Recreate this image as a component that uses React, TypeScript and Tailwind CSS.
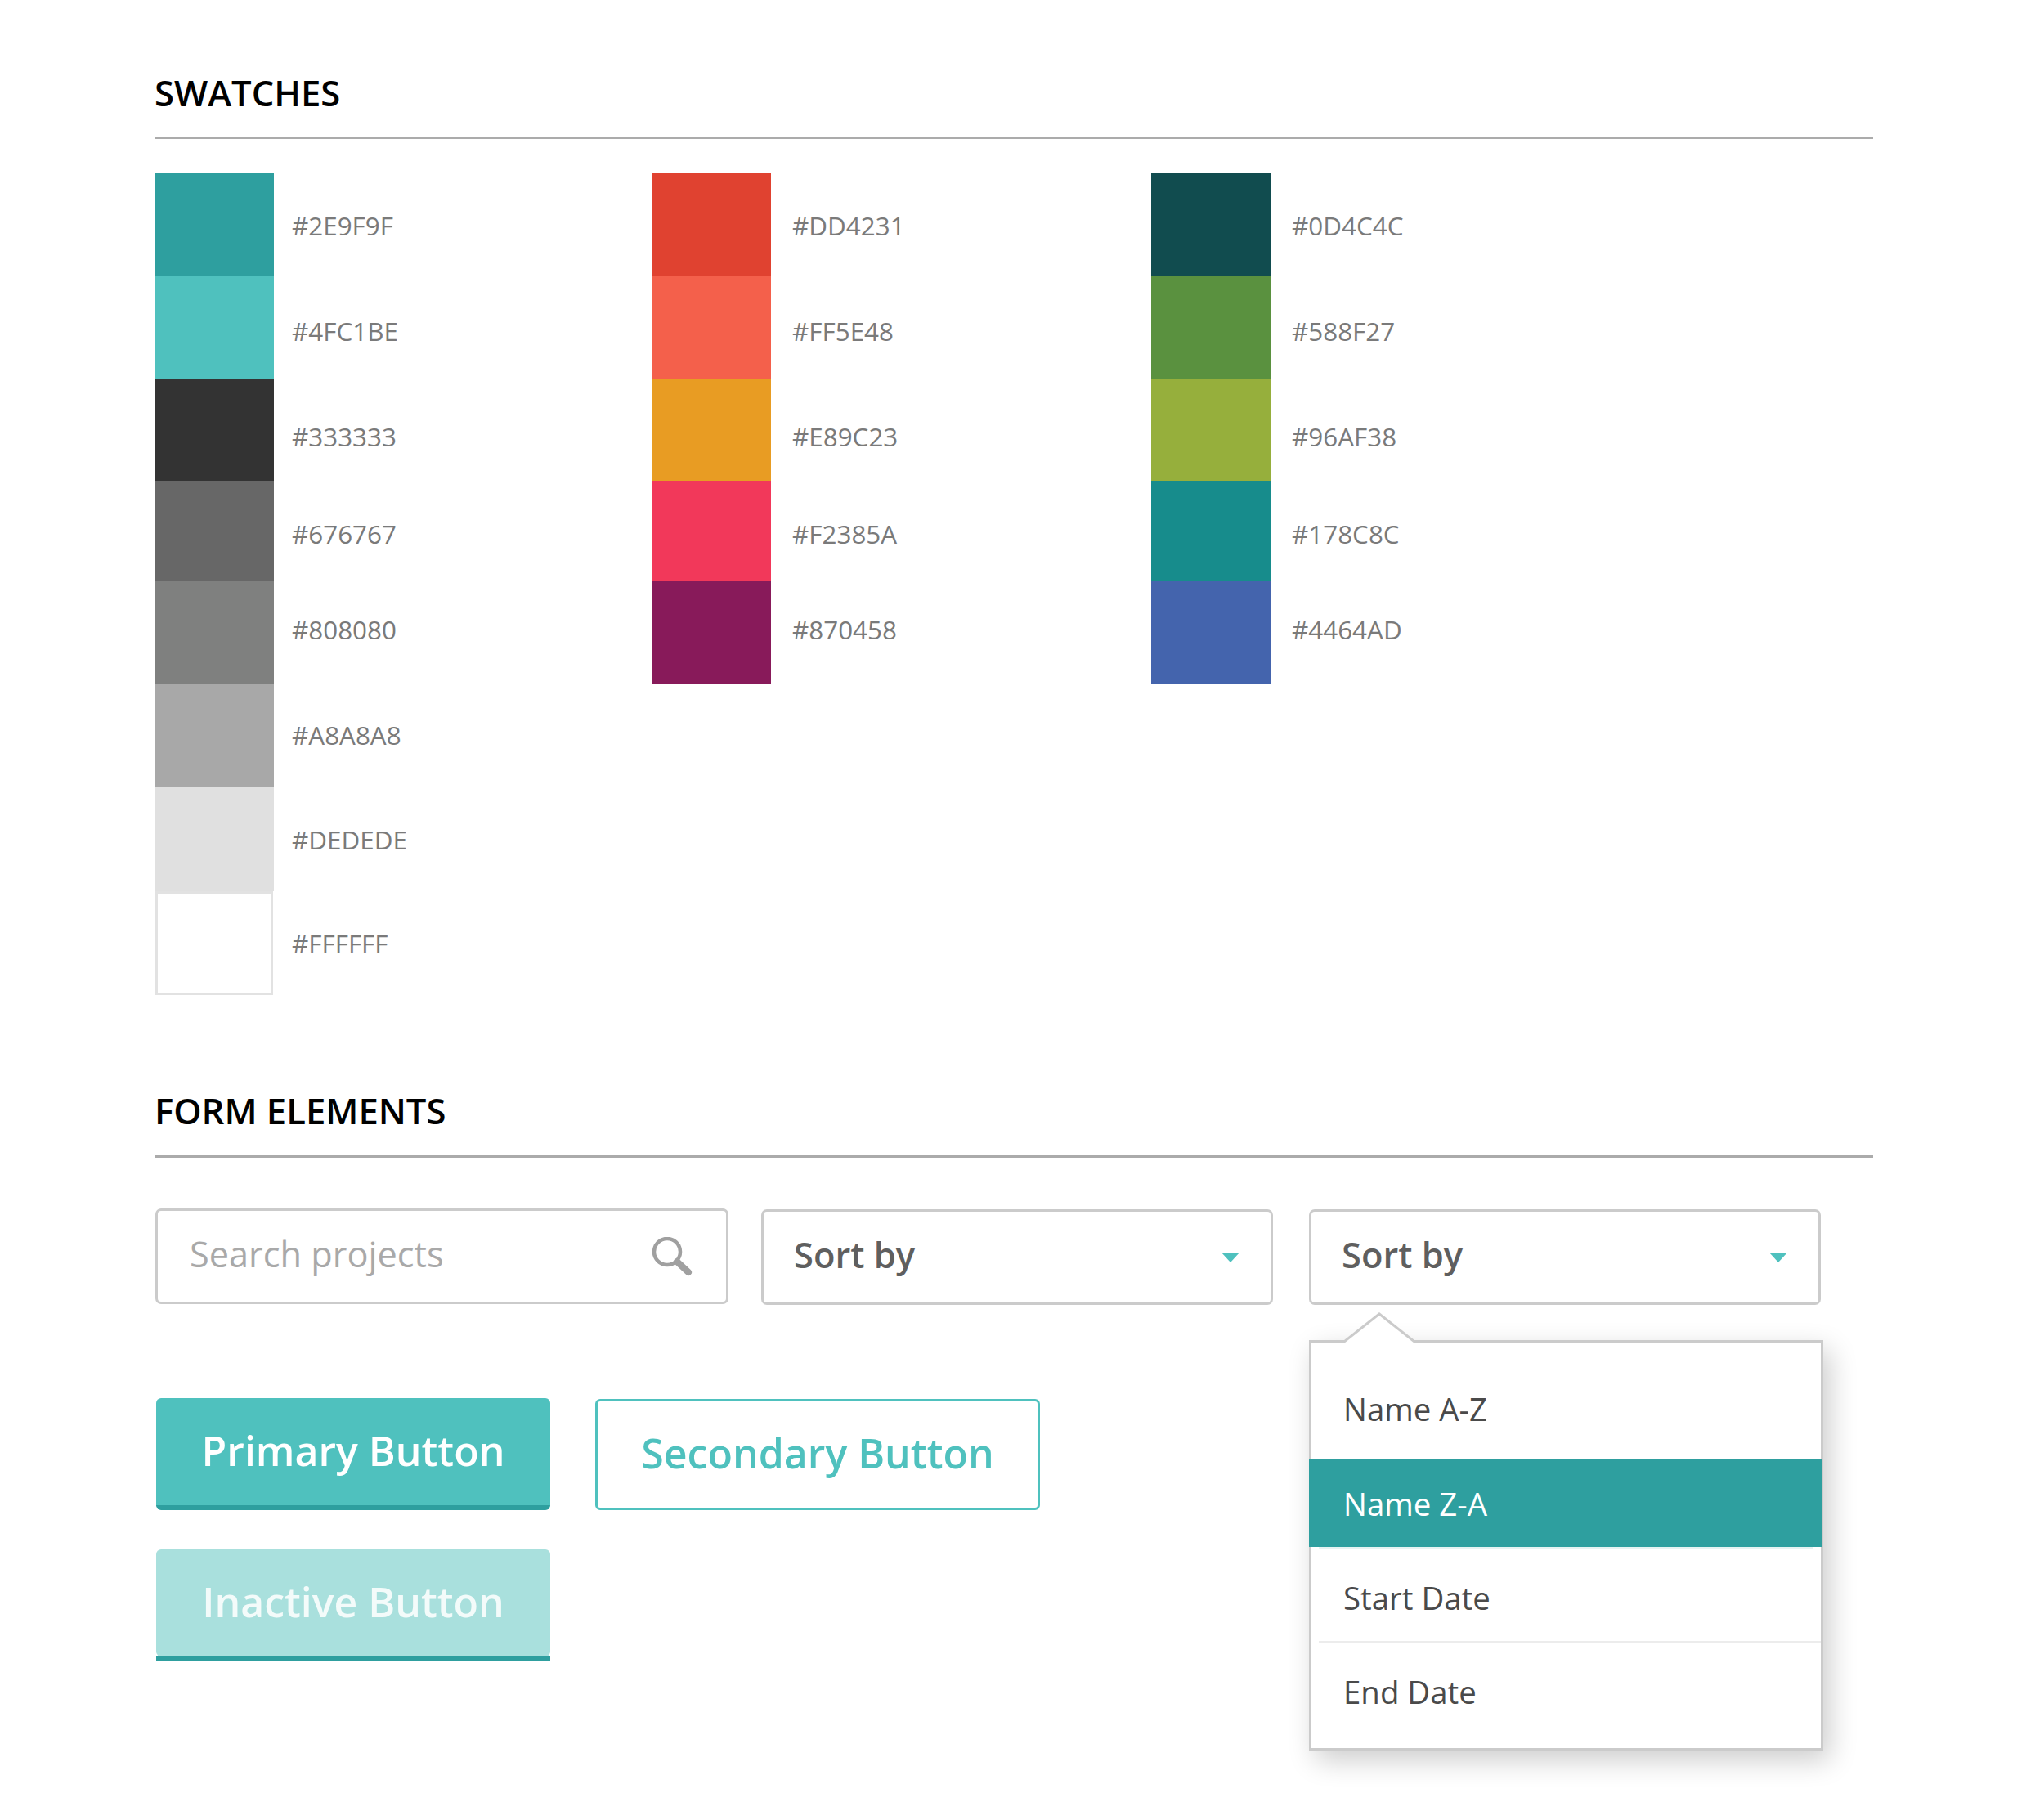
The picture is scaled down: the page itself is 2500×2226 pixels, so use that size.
const openSans = "font-['Open_Sans',sans-serif]";

type Swatch = { hex: string; bg: string; h: string; nudge: string };

const columnOne: Swatch[] = [
  { hex: "#2E9F9F", bg: "bg-[#2e9f9f]", h: "h-[126px]", nudge: "pt-[1px]" },
  { hex: "#4FC1BE", bg: "bg-[#4fc1be]", h: "h-[125px]", nudge: "pt-[8px]" },
  { hex: "#333333", bg: "bg-[#333333]", h: "h-[125px]", nudge: "pt-[16px]" },
  { hex: "#676767", bg: "bg-[#676767]", h: "h-[123px]", nudge: "pt-[6px]" },
  { hex: "#808080", bg: "bg-[#7f807f]", h: "h-[126px]", nudge: "pb-[9px]" },
  { hex: "#A8A8A8", bg: "bg-[#a8a8a8]", h: "h-[126px]", nudge: "pb-[3px]" },
  { hex: "#DEDEDE", bg: "bg-[#e0e0e0]", h: "h-[127px]", nudge: "pt-[0px]" },
];

const columnTwo: Swatch[] = [
  { hex: "#DD4231", bg: "bg-[#e04230]", h: "h-[126px]", nudge: "pt-[1px]" },
  { hex: "#FF5E48", bg: "bg-[#f4604b]", h: "h-[125px]", nudge: "pt-[8px]" },
  { hex: "#E89C23", bg: "bg-[#e89c23]", h: "h-[125px]", nudge: "pt-[16px]" },
  { hex: "#F2385A", bg: "bg-[#f2385a]", h: "h-[123px]", nudge: "pt-[6px]" },
  { hex: "#870458", bg: "bg-[#881a5a]", h: "h-[126px]", nudge: "pb-[9px]" },
];

const columnThree: Swatch[] = [
  { hex: "#0D4C4C", bg: "bg-[#114c4f]", h: "h-[126px]", nudge: "pt-[1px]" },
  { hex: "#588F27", bg: "bg-[#5a913f]", h: "h-[125px]", nudge: "pt-[8px]" },
  { hex: "#96AF38", bg: "bg-[#96af3c]", h: "h-[125px]", nudge: "pt-[16px]" },
  { hex: "#178C8C", bg: "bg-[#178c8c]", h: "h-[123px]", nudge: "pt-[6px]" },
  { hex: "#4464AD", bg: "bg-[#4464ad]", h: "h-[126px]", nudge: "pb-[9px]" },
];

function SwatchColumn({ items, width, labelGap }: { items: Swatch[]; width: string; labelGap: string }) {
  return (
    <div className={`flex flex-col ${width}`}>
      {items.map((item) => (
        <div key={item.hex} className={`flex items-stretch ${item.h}`}>
          <div className={`w-[146px] ${item.bg}`}></div>
          <div className={`flex items-center ${labelGap} ${item.nudge} text-[31.4px] font-medium text-[#7a7a7a]`}>
            {item.hex}
          </div>
        </div>
      ))}
    </div>
  );
}

function SectionTitle({ children, pad }: { children: string; pad: string }) {
  return (
    <h2 className={`border-b-[3px] border-[#ababab] ${pad} text-[43.6px] leading-[60px] font-semibold text-black`}>
      {children}
    </h2>
  );
}

function SortSelect({ width }: { width: string }) {
  return (
    <div className={`flex h-[117px] ${width} items-center justify-between rounded-[7px] border-[3px] border-[#cbcbcb] bg-white pr-[38px] pl-[37px]`}>
      <span className="mb-[5px] text-[43.5px] font-semibold text-[#5f5f5f]">Sort by</span>
      <svg width="22" height="12" viewBox="0 0 22 12">
        <polygon points="0,0 22,0 11,12" fill="#4fc1be" />
      </svg>
    </div>
  );
}

function SortMenu() {
  return (
    <div className="absolute top-[160px] left-0 w-[629px] border-[3px] border-[#cbcbcb] bg-white shadow-[8px_12px_32px_rgba(0,0,0,0.2)]">
      {/* little arrow that points up at the select */}
      <svg width="96" height="38" viewBox="0 0 96 38" className="absolute top-[-37px] left-[36px]">
        <polygon points="2,37 47,2 92,37" fill="#ffffff" />
        <polyline points="0,36 4,36 47,2 90,36 96,36" fill="none" stroke="#cbcbcb" strokeWidth="3" />
      </svg>
      <div className="flex h-[142px] items-center pt-[22px] pl-[39px] text-[38.4px] text-[#4a4a4a]">Name A-Z</div>
      <div className="-mr-[1px] -ml-[3px] flex h-[108px] items-center bg-[#2e9f9f] pt-[3px] pl-[42px] text-[38.4px] text-white">Name Z-A</div>
      <div className="mx-[9px] h-[3px] bg-[#e6f3f2]"></div>
      <div className="flex h-[112px] items-center pt-[8px] pl-[39px] text-[38.4px] text-[#4a4a4a]">Start Date</div>
      <div className="ml-[9px] h-[3px] bg-[#ececec]"></div>
      <div className="flex h-[128px] items-center pb-[8px] pl-[39px] text-[38.4px] text-[#4a4a4a]">End Date</div>
    </div>
  );
}

export default function App() {
  return (
    <div className={`min-h-[2226px] bg-white pt-[83px] pr-[209px] pl-[189px] ${openSans}`}>
      <SectionTitle pad="pb-[24px]">SWATCHES</SectionTitle>
      <div className="mt-[42px] flex">
        <div className="flex w-[608px] flex-col">
          <SwatchColumn items={columnOne} width="w-full" labelGap="pl-[22px]" />
          <div className="flex h-[127px] items-stretch">
            <div className="ml-[1px] w-[144px] border-[3px] border-[#e2e2e2] bg-white"></div>
            <div className="flex items-center pl-[23px] text-[31.4px] font-medium text-[#7a7a7a]">#FFFFFF</div>
          </div>
        </div>
        <SwatchColumn items={columnTwo} width="w-[611px]" labelGap="pl-[26px]" />
        <SwatchColumn items={columnThree} width="w-[500px]" labelGap="pl-[26px]" />
      </div>

      <div className="mt-[111px]">
        <SectionTitle pad="pb-[25px]">FORM ELEMENTS</SectionTitle>
      </div>
      <div className="mt-[62px] flex items-start">
        <div className="ml-[1px] flex h-[117px] w-[701px] items-center justify-between rounded-[7px] border-[3px] border-[#cbcbcb] bg-white pr-[41px] pl-[39px]">
          <span className="mb-[4px] text-[43.3px] text-[#a9a9a9]">Search projects</span>
          <svg width="50" height="48" viewBox="0 0 50 48" fill="none">
            <circle cx="19" cy="18" r="16" stroke="#a0a0a0" strokeWidth="4.5" />
            <line x1="31" y1="30" x2="45" y2="43" stroke="#a0a0a0" strokeWidth="8" strokeLinecap="round" />
          </svg>
        </div>
        <div className="mt-[1px] ml-[40px]">
          <SortSelect width="w-[626px]" />
        </div>
        <div className="relative mt-[1px] ml-[44px]">
          <SortSelect width="w-[626px]" />
          <SortMenu />
        </div>
      </div>

      <div className="mt-[114px] ml-[2px] flex items-start gap-[55px]">
        <div className="flex flex-col gap-[48px]">
          <button className="flex h-[137px] w-[482px] items-center justify-center rounded-[6px] border-b-[6px] border-[#2e9f9f] bg-[#4fc1be] pb-[2px] text-[50px] font-semibold text-white">
            Primary Button
          </button>
          <div className="flex w-[482px] flex-col">
            <button className="flex h-[131px] items-center justify-center rounded-[6px] bg-[#a9e0dd] pb-[3px] text-[50px] font-semibold text-[#f3fbfa]">
              Inactive Button
            </button>
            <div className="h-[6px] bg-[#2e9f9f]"></div>
          </div>
        </div>
        <button className="mt-[1px] flex h-[136px] w-[544px] items-center justify-center rounded-[6px] border-[3px] border-[#4fc1be] bg-white pb-[3px] text-[50px] font-semibold text-[#4fc1be]">
          Secondary Button
        </button>
      </div>
    </div>
  );
}
